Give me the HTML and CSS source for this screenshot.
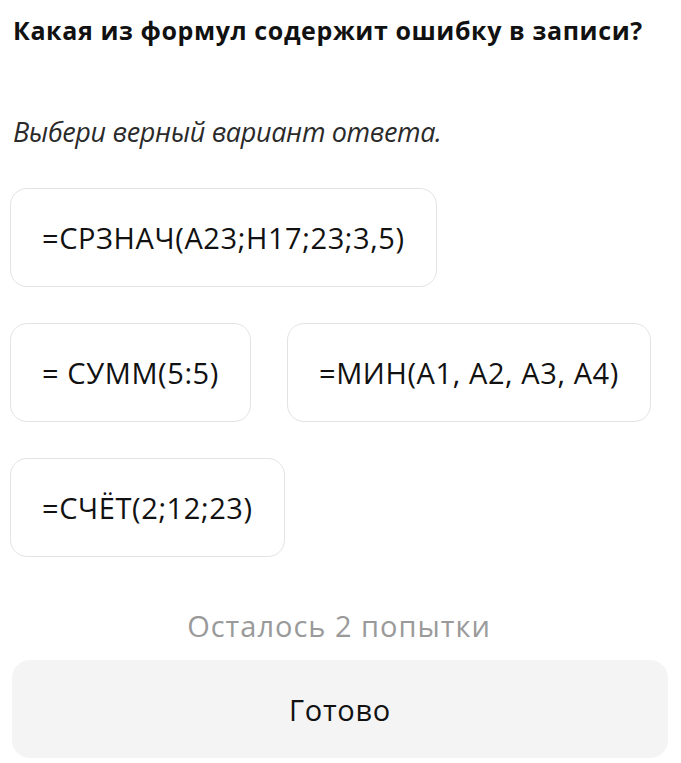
FILE: index.html
```html
<!DOCTYPE html>
<html lang="ru">
  <head>
    <meta charset="utf-8">
    <link rel="stylesheet" href="styles.css">
  </head>
  <body>
    <div class="quiz">
      <h1 class="question">Какая из формул содержит ошибку в записи?</h1>
      <p class="hint">Выбери верный вариант ответа.</p>

      <div class="options">
        <button class="option" type="button">=СРЗНАЧ(A23;H17;23;3,5)</button>
        <button class="option" type="button">= СУММ(5:5)</button>
        <button class="option" type="button">=МИН(A1, A2, A3, A4)</button>
        <button class="option" type="button">=СЧЁТ(2;12;23)</button>
      </div>

      <p class="attempts">Осталось 2 попытки</p>
      <button class="submit" type="button">Готово</button>
    </div>
  </body>
</html>
```

FILE: styles.css
```css
body {
  margin: 0;
  background: #fff;
  font-family: "Open Sans", "Noto Sans", sans-serif;
  color: #111;
}

.quiz {
  padding: 0 13px 0 10px;
}

.question {
  margin: 0;
  padding: 14px 0 0 3px;
  font-size: 25px;
  font-weight: 700;
  letter-spacing: 0.6px;
  line-height: 32px;
}

.hint {
  margin: 0;
  padding: 68px 0 0 3px;
  font-size: 27px;
  font-style: italic;
  letter-spacing: -0.35px;
  line-height: 36px;
  color: #2a2a2a;
}

.options {
  display: flex;
  flex-wrap: wrap;
  gap: 36px;
  padding-top: 38px;
}

.option {
  height: 99px;
  padding: 0 31px;
  background: #fff;
  border: 1.5px solid #e3e3e3;
  border-radius: 17px;
  font-family: inherit;
  font-size: 29px;
  letter-spacing: 0.6px;
  color: #111;
  cursor: pointer;
}

.attempts {
  margin: 0;
  padding-top: 50px;
  text-align: center;
  font-size: 29px;
  letter-spacing: 1px;
  line-height: 38px;
  color: #9a9a9a;
}

.submit {
  display: block;
  width: 656px;
  height: 98px;
  margin: 15px 0 0 2px;
  background: #f4f4f4;
  border: none;
  border-radius: 18px;
  font-family: inherit;
  font-size: 29px;
  letter-spacing: 0.7px;
  color: #111;
  cursor: pointer;
}
```
